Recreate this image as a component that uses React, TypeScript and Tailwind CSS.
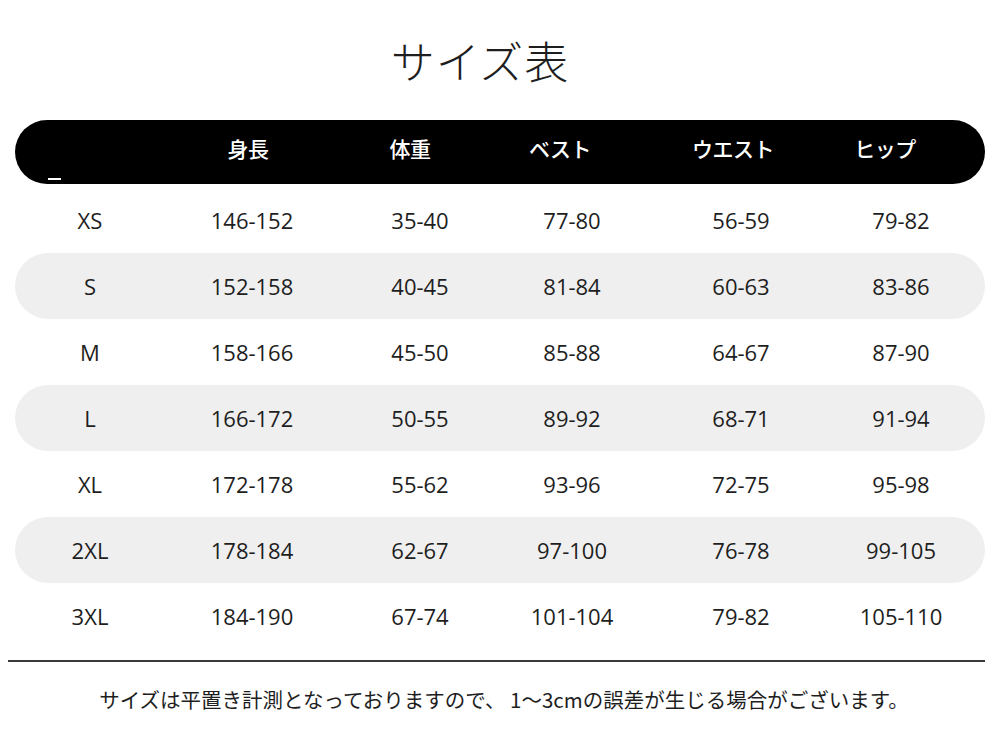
const rows = [
  { size: "XS", height: "146-152", weight: "35-40", bust: "77-80", waist: "56-59", hip: "79-82" },
  { size: "S", height: "152-158", weight: "40-45", bust: "81-84", waist: "60-63", hip: "83-86" },
  { size: "M", height: "158-166", weight: "45-50", bust: "85-88", waist: "64-67", hip: "87-90" },
  { size: "L", height: "166-172", weight: "50-55", bust: "89-92", waist: "68-71", hip: "91-94" },
  { size: "XL", height: "172-178", weight: "55-62", bust: "93-96", waist: "72-75", hip: "95-98" },
  { size: "2XL", height: "178-184", weight: "62-67", bust: "97-100", waist: "76-78", hip: "99-105" },
  { size: "3XL", height: "184-190", weight: "67-74", bust: "101-104", waist: "79-82", hip: "105-110" },
];

const headers = ["身長", "体重", "ベスト", "ウエスト", "ヒップ"];

const jp = { fontFamily: '"Noto Sans CJK JP", "Noto Sans", sans-serif' };
const num = { fontFamily: '"Open Sans", "Noto Sans CJK JP", sans-serif' };

const App = () => {
  return (
    <div className="w-[1000px] h-[749px] bg-white text-[#1e1e1e] overflow-hidden">
      {/* title */}
      <h1 className="pt-[30px] text-center text-[44px] leading-[60px] font-light tracking-[1px]" style={jp}>
        <span className="mr-[40px]">サイズ表</span>
      </h1>

      {/* header bar */}
      <div className="relative mx-[15px] mt-[30px] h-[64px] rounded-full bg-black text-white text-[21px] font-medium" style={jp}>
        <div className="grid grid-cols-[151px_164px_160px_140px_206px_98px] h-full items-center pb-[6px]">
          <div />
          {headers.map((h) => (
            <div key={h} className="text-center tracking-[-0.5px]">{h}</div>
          ))}
        </div>
        {/* tiny white mark */}
        <div className="absolute left-[33px] bottom-[4px] w-[13px] h-[2px] bg-white" />
      </div>

      {/* body */}
      <div className="mx-[15px] mt-[3px] text-[22px]" style={num}>
        {rows.map((r, i) => (
          <div
            key={r.size}
            className={`grid grid-cols-[150px_174px_162px_142px_196px_124px] h-[66px] items-center rounded-full ${i % 2 === 1 ? "bg-[#efefef]" : ""}`}
          >
            <div className="text-center">{r.size}</div>
            <div className="text-center">{r.height}</div>
            <div className="text-center">{r.weight}</div>
            <div className="text-center">{r.bust}</div>
            <div className="text-center">{r.waist}</div>
            <div className="text-center">{r.hip}</div>
          </div>
        ))}
      </div>

      {/* divider */}
      <div className="ml-[8px] mr-[15px] mt-[11px] h-[2px] bg-[#3a3a3a]" />

      {/* note */}
      <p className="mt-[22px] pl-[8px] text-center text-[20.5px]" style={jp}>
        サイズは平置き計測となっておりますので、 1～3cmの誤差が生じる場合がございます。
      </p>
    </div>
  );
};

export default App;
